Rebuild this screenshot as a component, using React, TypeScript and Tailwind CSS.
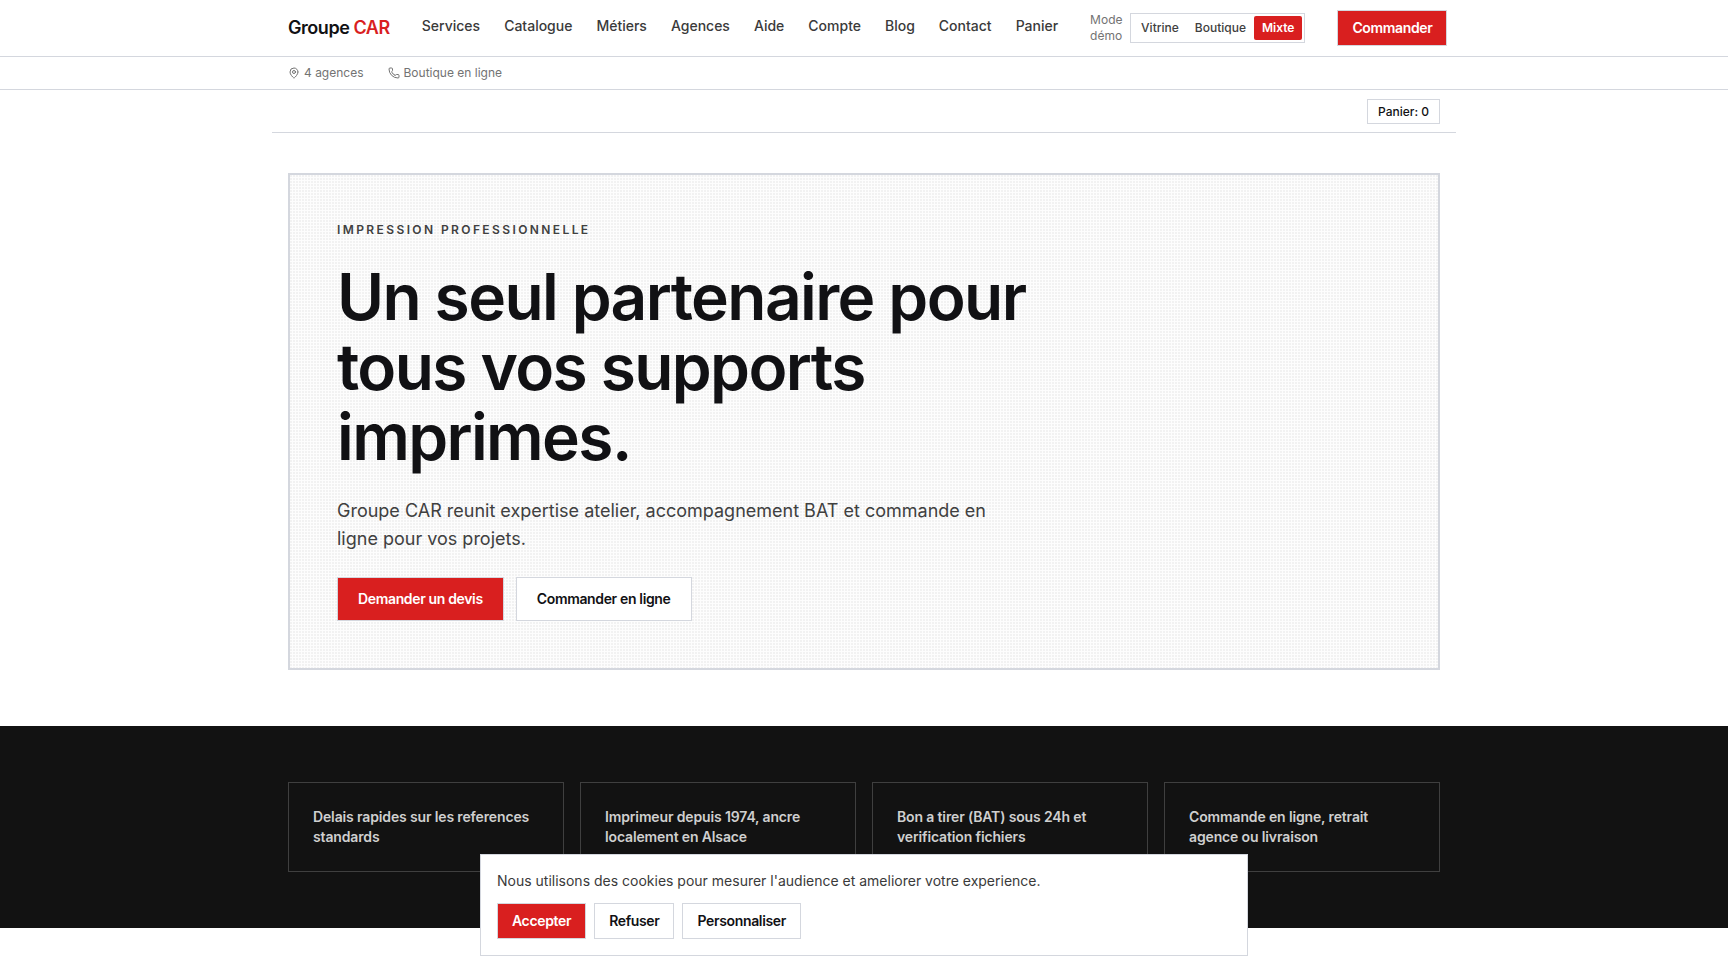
import { useState } from 'react'
import { MapPin, Phone } from 'lucide-react'
import { clsx } from 'clsx'

const NAV_LINKS = ['Services', 'Catalogue', 'Métiers', 'Agences', 'Aide', 'Compte', 'Blog', 'Contact', 'Panier']

const MODES = ['Vitrine', 'Boutique', 'Mixte']

const PROOFS = [
  'Delais rapides sur les references standards',
  'Imprimeur depuis 1974, ancre localement en Alsace',
  'Bon a tirer (BAT) sous 24h et verification fichiers',
  'Commande en ligne, retrait agence ou livraison',
]

function ModeSwitch() {
  const [mode, setMode] = useState('Mixte')

  return (
    <div className="flex items-center gap-2">
      <span id="mode-label" className="w-8 text-xs text-[#737373]">Mode démo</span>
      <div role="group" aria-labelledby="mode-label" className="flex border border-[#d4d7de] p-[2px]">
        {MODES.map((m) => (
          <button
            key={m}
            type="button"
            aria-pressed={m === mode}
            onClick={() => setMode(m)}
            className={clsx(
              'h-6 rounded-xs px-2 text-xs',
              m === mode ? 'bg-[#d91f1f] font-semibold text-white' : 'font-medium text-[#404040]',
            )}
          >
            {m}
          </button>
        ))}
      </div>
    </div>
  )
}

function Header() {
  return (
    <header>
      <div className="border-b border-[#d4d7de]">
        <div className="mx-auto flex h-14 max-w-[1184px] items-center gap-8 px-4 whitespace-nowrap">
          <a href="#" className="text-lg font-semibold tracking-tight">
            Groupe <span className="text-[#d91f1f]">CAR</span>
          </a>
          <nav aria-label="Principale" className="flex gap-6 pb-1 text-sm font-medium text-[#3a3a3a]">
            {NAV_LINKS.map((label) => (
              <a key={label} href="#">{label}</a>
            ))}
          </nav>
          <div className="whitespace-normal">
            <ModeSwitch />
          </div>
          <a
            href="#"
            className="flex h-9 items-center border border-[#d4d7de] bg-[#d91f1f] px-[14px] text-sm font-semibold tracking-tight text-white"
          >
            Commander
          </a>
        </div>
      </div>
      <div className="border-b border-[#d4d7de]">
        <div className="mx-auto flex h-8 max-w-[1184px] items-center gap-6 px-4 text-xs text-[#737373]">
          <a href="#" className="flex items-center gap-1">
            <MapPin size={12} strokeWidth={2} />
            4 agences
          </a>
          <a href="#" className="flex items-center gap-1">
            <Phone size={12} strokeWidth={2} />
            Boutique en ligne
          </a>
        </div>
      </div>
    </header>
  )
}

function Hero() {
  return (
    <section className="mx-auto max-w-[1184px] px-4 pt-10 pb-14">
      <div className="border border-[#d4d7de] bg-[#f2f2f2] bg-[linear-gradient(to_right,#fdfdfd_1px,transparent_1px),linear-gradient(to_bottom,#fdfdfd_1px,transparent_1px)] bg-[size:3px_3px] p-12 inset-ring inset-ring-[#d4d7de]">
        <p className="text-xs font-semibold tracking-[0.2em] text-[#404040] uppercase">Impression professionnelle</p>
        <h1 className="mt-6 max-w-[740px] text-[64px] leading-[70px] font-semibold tracking-tight text-[#111114]">
          Un seul partenaire pour tous vos supports imprimes.
        </h1>
        <p className="mt-[25px] max-w-[672px] text-lg leading-7 text-[#404040]">
          Groupe CAR reunit expertise atelier, accompagnement BAT et commande en ligne pour vos projets.
        </p>
        <div className="mt-6 flex gap-3 text-sm font-semibold tracking-tight">
          <a href="#" className="flex h-11 items-center border border-[#d4d7de] bg-[#d91f1f] px-5 text-white">
            Demander un devis
          </a>
          <a href="#" className="flex h-11 items-center border border-[#d4d7de] bg-white px-5">
            Commander en ligne
          </a>
        </div>
      </div>
    </section>
  )
}

function CookieBanner() {
  return (
    <div
      role="dialog"
      aria-label="Cookies"
      className="fixed inset-x-4 bottom-4 mx-auto max-w-3xl border border-[#d4d7de] bg-white p-4"
    >
      <p className="text-sm text-[#3a3a3a]">
        Nous utilisons des cookies pour mesurer l'audience et ameliorer votre experience.
      </p>
      <div className="mt-3 flex gap-2 text-sm font-semibold tracking-tight">
        <button type="button" className="h-9 border border-[#d4d7de] bg-[#d91f1f] px-[14px] text-white">Accepter</button>
        <button type="button" className="h-9 border border-[#d4d7de] px-[14px]">Refuser</button>
        <button type="button" className="h-9 border border-[#d4d7de] px-[14px]">Personnaliser</button>
      </div>
    </div>
  )
}

export default function App() {
  return (
    <div className="min-h-screen bg-white font-['Inter',sans-serif] text-[#111114]">
      <Header />
      <main>
        <div className="mx-auto flex max-w-[1184px] justify-end border-b border-[#d4d7de] px-4 pt-[9px] pb-2">
          <button type="button" className="h-[25px] border border-[#d4d7de] px-[10px] text-xs font-medium">
            Panier: 0
          </button>
        </div>
        <Hero />
        <section className="bg-[#121212] py-14">
          <ul className="mx-auto grid max-w-[1184px] grid-cols-4 gap-4 px-4">
            {PROOFS.map((text) => (
              <li key={text} className="border border-[#3f3f3f] p-6 text-sm font-semibold tracking-[-0.01em] text-[#cfcfcf]">
                {text}
              </li>
            ))}
          </ul>
        </section>
      </main>
      <CookieBanner />
    </div>
  )
}
